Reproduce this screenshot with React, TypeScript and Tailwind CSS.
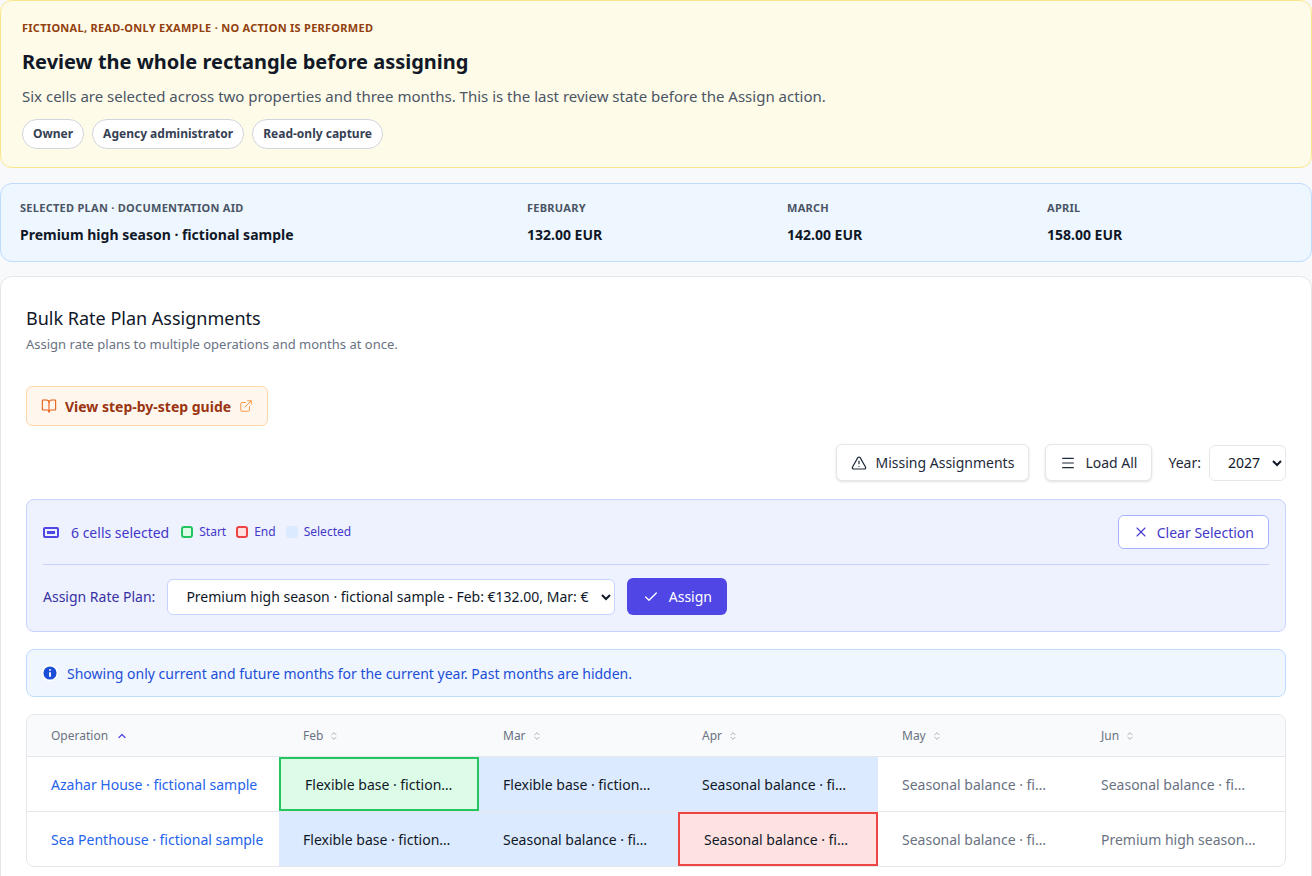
import { AlertTriangle, Menu, X, Check, Info, BookOpen, ExternalLink, ChevronUp, ChevronsUpDown } from 'lucide-react';

const months = ['Feb', 'Mar', 'Apr', 'May', 'Jun'];

type Cell = { text: string; kind: 'start' | 'end' | 'sel' | 'none' };

const rows: { name: string; cells: Cell[] }[] = [
  {
    name: 'Azahar House · fictional sample',
    cells: [
      { text: 'Flexible base · fiction…', kind: 'start' },
      { text: 'Flexible base · fiction…', kind: 'sel' },
      { text: 'Seasonal balance · fi…', kind: 'sel' },
      { text: 'Seasonal balance · fi…', kind: 'none' },
      { text: 'Seasonal balance · fi…', kind: 'none' },
    ],
  },
  {
    name: 'Sea Penthouse · fictional sample',
    cells: [
      { text: 'Flexible base · fiction…', kind: 'sel' },
      { text: 'Seasonal balance · fi…', kind: 'sel' },
      { text: 'Seasonal balance · fi…', kind: 'end' },
      { text: 'Seasonal balance · fi…', kind: 'none' },
      { text: 'Premium high season…', kind: 'none' },
    ],
  },
];

const cellClass = {
  start: 'bg-[#dcfce7] border-2 border-[#22c55e] text-gray-900',
  end: 'bg-[#fee2e2] border-2 border-[#ef4444] text-gray-900',
  sel: 'bg-[#dbeafe] text-gray-900',
  none: 'text-gray-500',
};

export default function App() {
  return (
    <div className="min-h-[876px] bg-[#f7f9fb] font-['Liberation_Sans',Arial,sans-serif] text-gray-900">
      {/* Banner */}
      <div className="rounded-xl border border-[#fde68a] bg-[#fefbe8] px-[21px] pt-[19px] pb-[18px]">
        <p className="text-[11px] font-bold tracking-wide text-[#92400e]">FICTIONAL, READ-ONLY EXAMPLE · NO ACTION IS PERFORMED</p>
        <h1 className="mt-[10px] text-[20px] font-bold text-[#111827]">Review the whole rectangle before assigning</h1>
        <p className="mt-[8px] text-[15px] text-gray-600">Six cells are selected across two properties and three months. This is the last review state before the Assign action.</p>
        <div className="mt-[12px] flex gap-2">
          {['Owner', 'Agency administrator', 'Read-only capture'].map((t) => (
            <span key={t} className="rounded-full border border-gray-300 bg-white px-[10px] py-[5px] text-[12px] font-bold text-gray-700">{t}</span>
          ))}
        </div>
      </div>

      {/* Plan summary */}
      <div className="mt-[15px] grid grid-cols-[507px_260px_260px_1fr] rounded-xl border border-[#bfdbfe] bg-[#eef6ff] px-[19px] py-[16px]">
        <div>
          <p className="text-[11px] font-bold tracking-wide text-gray-600">SELECTED PLAN · DOCUMENTATION AID</p>
          <p className="mt-[7px] text-[14px] font-bold">Premium high season · fictional sample</p>
        </div>
        {[['FEBRUARY', '132.00 EUR'], ['MARCH', '142.00 EUR'], ['APRIL', '158.00 EUR']].map(([m, v]) => (
          <div key={m}>
            <p className="text-[11px] font-bold tracking-wide text-gray-600">{m}</p>
            <p className="mt-[7px] text-[14px] font-bold">{v}</p>
          </div>
        ))}
      </div>

      {/* Main card */}
      <div className="mt-[14px] rounded-xl border border-gray-200 bg-white px-[25px] pt-[28px] pb-[24px]">
        <h2 className="text-[18px] text-gray-900">Bulk Rate Plan Assignments</h2>
        <p className="mt-[3px] text-[13px] text-gray-500">Assign rate plans to multiple operations and months at once.</p>

        <button className="mt-[32px] flex h-[40px] items-center gap-2 rounded-md border border-[#fed7aa] bg-[#fff7ed] px-[14px] text-[14px] font-bold text-[#9a3412]">
          <BookOpen className="h-4 w-4 text-[#ea580c]" strokeWidth={1.6} />
          View step-by-step guide
          <ExternalLink className="h-[14px] w-[14px] text-[#fb923c]" strokeWidth={1.6} />
        </button>

        <div className="mt-[18px] flex items-center justify-end gap-4">
          <button className="flex h-[37px] items-center gap-[9px] rounded-md border border-gray-200 bg-white px-[14px] text-[14px] text-gray-800 shadow-sm">
            <AlertTriangle className="h-4 w-4" strokeWidth={1.8} /> Missing Assignments
          </button>
          <button className="flex h-[37px] items-center gap-[9px] rounded-md border border-gray-200 bg-white px-[14px] text-[14px] text-gray-800 shadow-sm">
            <Menu className="h-4 w-4" strokeWidth={1.8} /> Load All
          </button>
          <div className="flex items-center gap-2">
            <span className="text-[14px] text-gray-800">Year:</span>
            <select className="h-[36px] w-[77px] rounded-md border border-gray-200 bg-white pl-[14px] text-[14px]" defaultValue="2027">
              <option>2027</option>
            </select>
          </div>
        </div>

        {/* Selection panel */}
        <div className="mt-[18px] rounded-lg border border-[#c7d2fe] bg-[#eef2ff] px-[16px] pt-[15px] pb-[16px]">
          <div className="flex items-center justify-between border-b border-[#c7d2fe] pb-[15px]">
            <div className="flex items-center gap-[6px] text-[#4338ca]">
              <span className="mr-[6px] flex h-[11px] w-[16px] items-center justify-center rounded-[2px] border-2 border-[#4f46e5]"><span className="h-[3px] w-[8px] bg-[#4f46e5]" /></span>
              <span className="text-[14px]">6 cells selected</span>
              <span className="ml-[6px] h-[12px] w-[12px] rounded-[3px] border-2 border-[#22c55e] bg-[#dcfce7]" />
              <span className="text-[12px]">Start</span>
              <span className="ml-[4px] h-[12px] w-[12px] rounded-[3px] border-2 border-[#ef4444] bg-[#fee2e2]" />
              <span className="text-[12px]">End</span>
              <span className="ml-[4px] h-[12px] w-[12px] rounded-[3px] bg-[#dbeafe]" />
              <span className="text-[12px]">Selected</span>
            </div>
            <button className="flex h-[34px] items-center gap-2 rounded-md border border-[#a5b4fc] bg-white px-[14px] text-[14px] text-[#4338ca]">
              <X className="h-4 w-4" strokeWidth={1.6} /> Clear Selection
            </button>
          </div>
          <div className="mt-[13px] flex items-center gap-3">
            <span className="text-[14px] text-[#3730a3]">Assign Rate Plan:</span>
            <select className="h-[36px] w-[448px] rounded-md border border-[#c7d2fe] bg-white pl-[14px] pr-2 text-[14px] text-gray-900" defaultValue="a">
              <option value="a">Premium high season · fictional sample - Feb: €132.00, Mar: €142.00, Apr: €158.00</option>
            </select>
            <button className="flex h-[37px] w-[100px] items-center justify-center gap-[10px] rounded-md bg-[#4f46e5] text-[14px] text-white">
              <Check className="h-4 w-4" strokeWidth={2} /> Assign
            </button>
          </div>
        </div>

        <div className="mt-[17px] flex h-[48px] items-center gap-[8px] rounded-lg border border-[#bfdbfe] bg-[#eff6ff] px-[14px] text-[14px] text-[#1d4ed8]">
          <Info className="h-[18px] w-[18px] fill-[#1d4ed8] text-white" strokeWidth={2.5} />
          Showing only current and future months for the current year. Past months are hidden.
        </div>

        {/* Table */}
        <div className="mt-[17px] overflow-hidden rounded-lg border border-gray-200">
          <div className="grid grid-cols-[252px_200px_199px_200px_199px_1fr] border-b border-gray-200 bg-[#f9fafb] text-[12px] text-gray-500">
            <div className="flex h-[41px] items-center gap-2 pl-[24px]">Operation <ChevronUp className="h-3 w-3 text-[#4f46e5]" strokeWidth={2.5} /></div>
            {months.map((m) => (
              <div key={m} className="flex h-[41px] items-center gap-[6px] pl-[24px]">{m} <ChevronsUpDown className="h-[10px] w-[10px] text-gray-400" /></div>
            ))}
          </div>
          {rows.map((r, i) => (
            <div key={r.name} className={`grid grid-cols-[252px_200px_199px_200px_199px_1fr] text-[14px] ${i === 0 ? 'border-b border-gray-200' : ''}`}>
              <div className="flex h-[54px] items-center pl-[24px] text-[#2563eb]">{r.name}</div>
              {r.cells.map((c, j) => (
                <div key={j} className={`flex h-[54px] items-center pl-[24px] ${cellClass[c.kind]}`}>{c.text}</div>
              ))}
            </div>
          ))}
        </div>
      </div>
    </div>
  );
}
